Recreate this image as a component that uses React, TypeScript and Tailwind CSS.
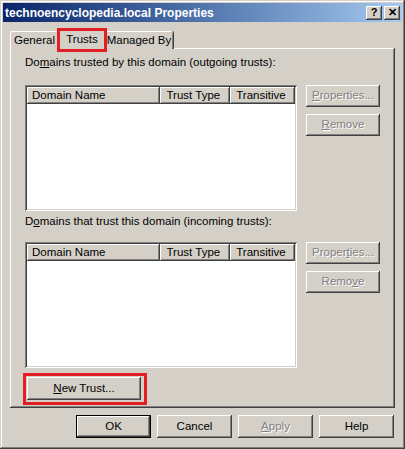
import React from "react";

const raised =
  "shadow-[inset_-1px_-1px_0_#404040,inset_1px_1px_0_#ffffff,inset_-2px_-2px_0_#808080,inset_2px_2px_0_#d4d0c8]";
const sunken =
  "shadow-[inset_1px_1px_0_#808080,inset_-1px_-1px_0_#ffffff,inset_2px_2px_0_#404040,inset_-2px_-2px_0_#d4d0c8]";
const headerCell =
  "shadow-[inset_-1px_-1px_0_#404040,inset_1px_1px_0_#ffffff,inset_-2px_-2px_0_#808080]";
const disabled = "text-[#808080] [text-shadow:1px_1px_0_#ffffff]";

function Btn({
  children,
  off,
  className = "",
}: {
  children: React.ReactNode;
  off?: boolean;
  className?: string;
}) {
  return (
    <div
      className={`flex items-center justify-center bg-[#d4d0c8] text-[11.5px] ${raised} ${
        off ? disabled : "text-black"
      } ${className}`}
    >
      <span>{children}</span>
    </div>
  );
}

function TrustList() {
  return (
    <div className={`w-[272px] h-[126px] bg-white p-[2px] ${sunken}`}>
      <div className="flex h-[17px] text-[11.5px] text-black">
        <div className={`w-[134px] bg-[#d4d0c8] pl-[5px] flex items-center ${headerCell}`}>Domain Name</div>
        <div className={`w-[70px] bg-[#d4d0c8] pl-[6px] flex items-center ${headerCell}`}>Trust Type</div>
        <div className={`w-[65px] bg-[#d4d0c8] pl-[6px] flex items-center ${headerCell}`}>Transitive</div>
      </div>
    </div>
  );
}

export default function App() {
  return (
    <div
      className="relative w-[405px] h-[449px] bg-[#d4d0c8] p-[3px] shadow-[inset_-1px_-1px_0_#404040,inset_1px_1px_0_#d4d0c8,inset_-2px_-2px_0_#808080,inset_2px_2px_0_#ffffff] flex flex-col"
      style={{ fontFamily: '"Liberation Sans", Arial, sans-serif' }}
    >
      {/* title bar */}
      <div className="h-[19px] flex items-center bg-gradient-to-r from-[#0a246a] to-[#a6caf0] pl-[2px] pr-[2px]">
        <span className="text-white font-bold text-[12px] flex-1">
          technoencyclopedia.local Properties
        </span>
        <div className="flex gap-[2px]">
          <div className={`w-[16px] h-[14px] bg-[#d4d0c8] flex items-center justify-center text-[11px] font-bold text-black ${raised}`}>?</div>
          <div className={`w-[16px] h-[14px] bg-[#d4d0c8] flex items-center justify-center text-[11px] font-bold text-black ${raised}`}>✕</div>
        </div>
      </div>

      {/* tabs */}
      <div className="ml-[7px] mt-[3px] flex items-end h-[23px] text-[11.5px] text-black relative z-10">
        <div className="w-[48px] h-[18px] mb-[-1px] bg-[#d4d0c8] rounded-t-[2px] border-l border-t border-white shadow-[inset_-1px_0_0_#808080,1px_0_0_#404040] flex items-center justify-center">
          General
        </div>
        <div className="w-[47px] h-[22px] mb-[-2px] bg-[#d4d0c8] rounded-t-[2px] border-l border-t border-white shadow-[inset_-1px_0_0_#808080,1px_0_0_#404040] flex items-start justify-center pt-[2px]">
          Trusts
        </div>
        <div className="w-[68px] h-[18px] mb-[-1px] bg-[#d4d0c8] rounded-t-[2px] border-t border-white shadow-[inset_-1px_0_0_#808080,1px_0_0_#404040] flex items-center justify-center">
          Managed By
        </div>
      </div>

      {/* tab panel */}
      <div
        className={`ml-[7px] w-[385px] h-[360px] bg-[#d4d0c8] pl-[15px] pt-[8px] text-[11.5px] text-black ${raised}`}
      >
        <div className="h-[13px] leading-[13px]">
          Do<u>m</u>ains trusted by this domain (outgoing trusts):
        </div>
        <div className="flex gap-[9px] mt-[16px]">
          <TrustList />
          <div className="flex flex-col gap-[7px]">
            <Btn off className="w-[74px] h-[22px]">
              <u>P</u>roperties...
            </Btn>
            <Btn off className="w-[74px] h-[22px]">
              <u>R</u>emove
            </Btn>
          </div>
        </div>

        <div className="h-[13px] leading-[13px] mt-[4px]">
          D<u>o</u>mains that trust this domain (incoming trusts):
        </div>
        <div className="flex gap-[9px] mt-[14px]">
          <TrustList />
          <div className="flex flex-col gap-[7px]">
            <Btn off className="w-[74px] h-[22px]">
              Proper<u>t</u>ies...
            </Btn>
            <Btn off className="w-[74px] h-[22px]">
              Remo<u>v</u>e
            </Btn>
          </div>
        </div>

        <Btn className="ml-[2px] mt-[9px] w-[114px] h-[23px]">
          <u>N</u>ew Trust...
        </Btn>
      </div>

      {/* dialog buttons */}
      <div className="flex justify-end gap-[6px] mt-[7px] pr-[8px]">
        <Btn className="w-[75px] h-[23px] outline outline-1 outline-black -outline-offset-1 shadow-[inset_-2px_-2px_0_#404040,inset_2px_2px_0_#ffffff,inset_-3px_-3px_0_#808080]">OK</Btn>
        <Btn className="w-[75px] h-[23px]">Cancel</Btn>
        <Btn off className="w-[75px] h-[23px]">
          <u>A</u>pply
        </Btn>
        <Btn className="w-[75px] h-[23px]">Help</Btn>
      </div>

      {/* red highlight boxes */}
      <div className="absolute left-[57px] top-[28px] w-[50px] h-[24px] border-[3px] border-[#e31e24] z-20" />
      <div className="absolute left-[23px] top-[373px] w-[124px] h-[32px] border-[3px] border-[#e31e24] z-20" />
    </div>
  );
}
